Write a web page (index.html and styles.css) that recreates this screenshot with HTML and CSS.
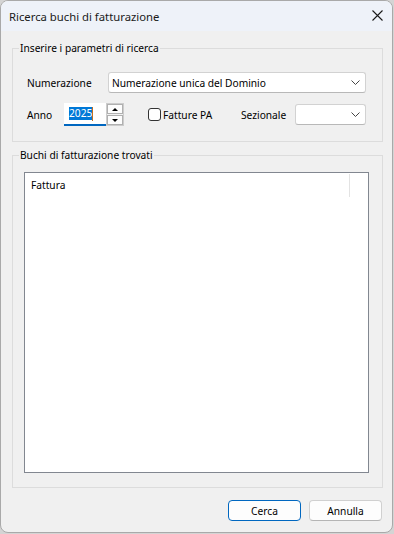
FILE: index.html
```html
<!doctype html>
<html lang="it">
<head>
    <meta charset="UTF-8">
    <title>Ricerca buchi di fatturazione</title>
    <link rel="stylesheet" href="styles.css">
</head>
<body>
    <div class="dialog">
        <div class="titlebar">
            <span class="title">Ricerca buchi di fatturazione</span>
            <svg class="close" width="11" height="11" viewBox="0 0 11 11">
                <path d="M0.5 0.5L10.5 10.5M10.5 0.5L0.5 10.5" stroke="#1a1a1a" stroke-width="1.1" fill="none"/>
            </svg>
        </div>
        <div class="content">
            <fieldset class="group params">
                <legend>Inserire i parametri di ricerca</legend>
                <div class="params-body">
                    <div class="row">
                        <span class="lbl lbl-num">Numerazione</span>
                        <div class="combo combo-num">
                            <span>Numerazione unica del Dominio</span>
                            <svg width="9" height="5" viewBox="0 0 9 5"><path d="M0.5 0.5L4.5 4.5L8.5 0.5" stroke="#444" fill="none"/></svg>
                        </div>
                    </div>
                    <div class="row row2">
                        <span class="lbl lbl-anno">Anno</span>
                        <div class="year"><span class="sel">2025</span><span class="caret"></span></div>
                        <div class="spinner">
                            <span class="spin-btn"><i class="tri up"></i></span>
                            <span class="spin-btn"><i class="tri down"></i></span>
                        </div>
                        <span class="check"></span>
                        <span class="chk-lbl">Fatture PA</span>
                        <span class="lbl lbl-sez">Sezionale</span>
                        <div class="combo combo-sez">
                            <span></span>
                            <svg width="9" height="5" viewBox="0 0 9 5"><path d="M0.5 0.5L4.5 4.5L8.5 0.5" stroke="#444" fill="none"/></svg>
                        </div>
                    </div>
                </div>
            </fieldset>
            <fieldset class="group results">
                <legend>Buchi di fatturazione trovati</legend>
                <div class="results-body">
                    <div class="list">
                        <div class="list-head">
                            <span class="col1">Fattura</span>
                            <span class="col2"></span>
                        </div>
                    </div>
                </div>
            </fieldset>
            <div class="buttons">
                <button class="btn btn-default">Cerca</button>
                <button class="btn">Annulla</button>
            </div>
        </div>
    </div>
</body>
</html>
```

FILE: styles.css
```css
*{
    margin: 0;
    padding: 0;
    box-sizing: border-box;
}
html, body{
    width: 394px;
    height: 534px;
    overflow: hidden;
    background-color: #d4d4d4;
}
body{
    font-family: "Noto Sans", sans-serif;
    font-size: 10.2px;
    color: #000;
}
.dialog{
    width: 393px;
    height: 533px;
    border: 1px solid #a9a9a9;
    border-radius: 8px;
    overflow: hidden;
    background-color: #f0f0f0;
}
.titlebar{
    height: 30px;
    background-color: #eef2f9;
    display: flex;
    align-items: center;
    justify-content: space-between;
    padding: 0 9px 0 8px;
}
.title{
    font-size: 11.3px;
    color: #1a1a1a;
}
.close{
    margin-top: -1px;
}
.content{
    padding: 10px 9px 0 11px;
}
.group{
    border: 1px solid #dcdcdc;
    padding: 0 6px;
}
.group legend{
    padding: 0 1px;
    line-height: 15px;
}
.params-body{
    padding: 16px 10px 15px 8px;
}
.row{
    display: flex;
    align-items: center;
}
.row2{
    margin-top: 10px;
    height: 23px;
}
.lbl-num{
    width: 81px;
}
.lbl-anno{
    width: 37px;
}
.combo{
    height: 21px;
    background-color: #fff;
    border: 1px solid #d2d2d2;
    border-bottom-color: #b8b8b8;
    border-radius: 3px;
    display: flex;
    align-items: center;
    justify-content: space-between;
    padding: 0 5px 0 3px;
}
.combo-num{
    flex: 1;
}
.combo-sez{
    width: 71px;
    height: 21px;
}
.year{
    width: 42px;
    height: 23px;
    background-color: #fff;
    border-bottom: 2px solid #0067c0;
    display: flex;
    align-items: center;
    padding-left: 5px;
}
.year .sel{
    background-color: #0078d7;
    color: #fff;
    line-height: 13px;
}
.year .caret{
    width: 1px;
    height: 14px;
    background-color: #c07020;
}
.spinner{
    width: 18px;
    height: 23px;
    border: 1px solid #cccccc;
    background-color: #f0f0f0;
    display: flex;
    flex-direction: column;
    justify-content: space-between;
}
.spin-btn{
    height: 10px;
    background-color: #fdfdfd;
    border: 1px solid #b0b0b0;
    display: flex;
    align-items: center;
    justify-content: center;
}
.tri{
    width: 0;
    height: 0;
    border-left: 3px solid transparent;
    border-right: 3px solid transparent;
}
.tri.up{
    border-bottom: 3px solid #000;
}
.tri.down{
    border-top: 3px solid #000;
}
.check{
    width: 13px;
    height: 13px;
    margin-left: 24px;
    border: 1px solid #333;
    border-radius: 3px;
    background-color: #fff;
}
.chk-lbl{
    width: 80px;
    padding-left: 2px;
}
.lbl-sez{
    width: 54px;
}
.results{
    margin-top: 6px;
}
.results-body{
    padding: 9px 7px 14px 5px;
}
.list{
    height: 301px;
    background-color: #fff;
    border: 1px solid #828790;
}
.list-head{
    display: flex;
    height: 24px;
}
.col1{
    width: 324px;
    padding-left: 6px;
    line-height: 24px;
}
.col2{
    margin-top: 1px;
    height: 23px;
    border-left: 1px solid #e3e3e3;
}
.buttons{
    margin-top: 12px;
    display: flex;
    justify-content: flex-end;
    gap: 8px;
    padding-right: 1px;
}
.btn{
    width: 73px;
    height: 21px;
    font-family: "Noto Sans", sans-serif;
    font-size: 10.2px;
    color: #000;
    background-color: #fdfdfd;
    border: 1px solid #d0d0d0;
    border-bottom-color: #b5b5b5;
    border-radius: 4px;
}
.btn-default{
    border-color: #0067c0;
}
```
